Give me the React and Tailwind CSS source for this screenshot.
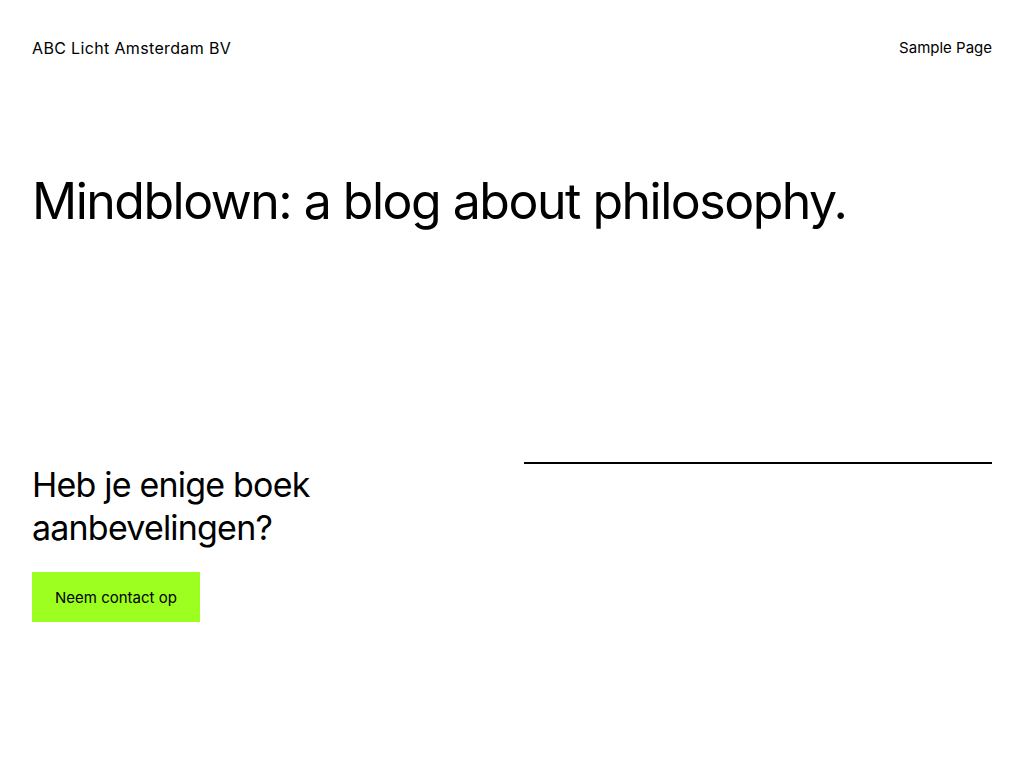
import React from 'react';

export default function App() {
  return (
    <div className="min-h-[768px] bg-white text-black px-8" style={{ fontFamily: 'Inter, "Noto Sans", sans-serif' }}>
      {/* header */}
      <header className="flex items-center justify-between pt-[36px]">
        <a className="text-[16px] leading-6 tracking-[0.35px]">ABC Licht Amsterdam BV</a>
        <nav className="text-[15px] leading-6">
          <a>Sample Page</a>
        </nav>
      </header>

      <h1 className="mt-[111px] text-[50px] leading-[60px] tracking-[-1.5px]">
        Mindblown: a blog about philosophy.
      </h1>

      <section className="mt-[232px] grid grid-cols-2 gap-6 items-start">
        <div>
          <h2 className="text-[34px] leading-[43px] tracking-[-0.8px]">
            Heb je enige boek<br />aanbevelingen?
          </h2>
          <button className="mt-[23px] bg-[#9dff20] h-[50px] px-[23px] text-[15px] leading-none">
            Neem contact op
          </button>
        </div>
        <div className="-mt-px">
          <hr className="border-0 border-t-2 border-black" />
        </div>
      </section>
    </div>
  );
}
